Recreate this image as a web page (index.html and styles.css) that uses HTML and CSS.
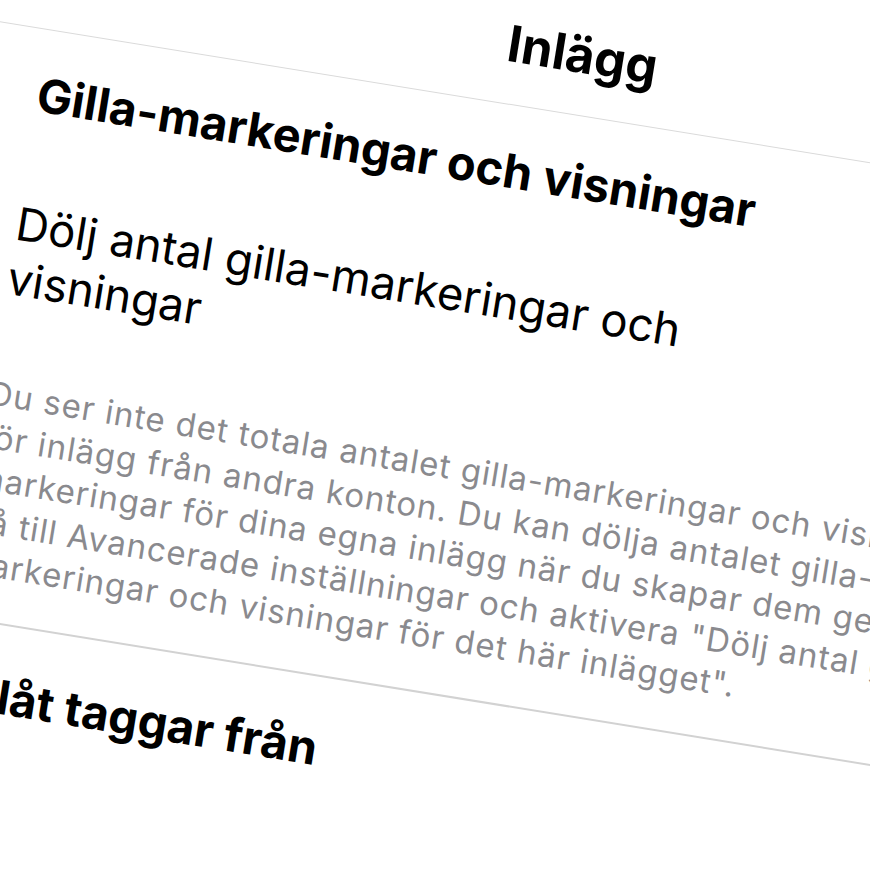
FILE: index.html
```html
<!DOCTYPE html>
<html lang="sv">
<head>
    <meta charset="UTF-8">
    <meta name="viewport" content="width=device-width, initial-scale=1.0">
    <title>Inlägg</title>
    <link rel="stylesheet" href="styles.css">
</head>
<body>

    <div class="screen">
        <header class="nav">
            <h1>Inlägg</h1>
        </header>

        <section class="group">
            <h2>Gilla-markeringar och visningar</h2>
            <div class="row">
                <span class="label">Dölj antal gilla-markeringar och visningar</span>
                <span class="switch"><span class="knob"></span></span>
            </div>
            <p class="note">Du ser inte det totala antalet gilla-markeringar och visningar<br>
                för inlägg från andra konton. Du kan dölja antalet gilla-<br>
                markeringar för dina egna inlägg när du skapar dem genom att<br>
                gå till Avancerade inställningar och aktivera "Dölj antal gilla-<br>
                markeringar och visningar för det här inlägget".</p>
        </section>

        <section class="group last">
            <h2>Tillåt taggar från</h2>
        </section>
    </div>

</body>
</html>
```

FILE: styles.css
```css
html, body {
    margin: 0;
    height: 100%;
    overflow: hidden;
    background: #ffffff;
}

body {
    font-family: Inter, "Noto Sans", Arial, sans-serif;
    color: #000;
}

/* the phone screen is shot at a tilt */
.screen {
    width: 1168px;
    height: 1200px;
    background: #ffffff;
    transform-origin: 0 0;
    transform: rotate(9.2deg) translateY(-102px);
}

.nav {
    padding: 33px 0 30px;
    border-bottom: 1.5px solid #dadada;
    text-align: center;
}

.nav h1 {
    margin: 0;
    font-size: 50px;
    line-height: 60px;
    font-weight: 700;
}

.group {
    padding: 36px 52px 34px;
    border-bottom: 2.5px solid #d2d2d2;
}

.group.last {
    padding-top: 42px;
    border-bottom: none;
}

.group h2 {
    margin: 0;
    font-size: 47px;
    line-height: 58px;
    font-weight: 700;
}

.row {
    display: flex;
    align-items: center;
    justify-content: space-between;
    padding-top: 74px;
}

.label {
    max-width: 820px;
    font-size: 45.5px;
    line-height: 55px;
}

.switch {
    position: relative;
    width: 132px;
    height: 80px;
    border-radius: 40px;
    background: #e9e9eb;
}

.knob {
    position: absolute;
    top: 5px;
    left: 5px;
    width: 70px;
    height: 70px;
    border-radius: 50%;
    background: #fff;
    box-shadow: 0 3px 8px rgba(0, 0, 0, 0.2);
}

.note {
    margin: 68px -90px 0 0;
    font-size: 33px;
    line-height: 42.5px;
    letter-spacing: 1px;
    color: #8a8a8e;
}
```
